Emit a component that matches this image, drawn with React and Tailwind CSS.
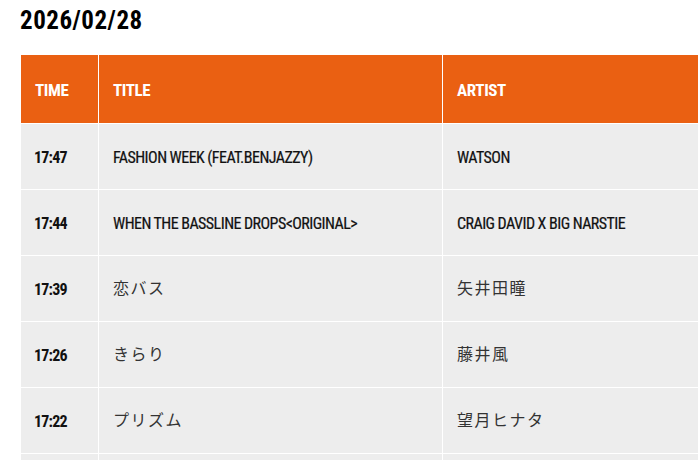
import React from "react";

const rows = [
  { time: "17:47", title: "FASHION WEEK (FEAT.BENJAZZY)", artist: "WATSON", jp: false },
  { time: "17:44", title: "WHEN THE BASSLINE DROPS<ORIGINAL>", artist: "CRAIG DAVID X BIG NARSTIE", jp: false },
  { time: "17:39", title: "恋バス", artist: "矢井田瞳", jp: true },
  { time: "17:26", title: "きらり", artist: "藤井風", jp: true },
  { time: "17:22", title: "プリズム", artist: "望月ヒナタ", jp: true },
  { time: "", title: "", artist: "", jp: false },
];

const cond = "font-['Roboto_Condensed','Open_Sans',sans-serif]";
const jpf = "font-['Noto_Sans_CJK_JP',sans-serif]";

function Cell({ jp, className, children }) {
  return (
    <div
      className={`flex items-center pl-[14px] leading-none ${className} ${
        jp
          ? `${jpf} text-[16px] tracking-[1.5px] text-[#333] pb-[3px]`
          : `${cond} text-[16px] tracking-[-0.55px] text-[#111] pt-[2px] [-webkit-text-stroke:0.2px_#111]`
      }`}
    >
      {children}
    </div>
  );
}

export default function App() {
  return (
    <div className="w-[698px] h-[460px] overflow-hidden bg-white">
      <h1 className={`${cond} font-bold text-[25px] tracking-[0.5px] leading-none text-black pl-[20px] pt-[8px] h-[55px]`}>
        2026/02/28
      </h1>
      <div className="ml-[21px] w-[760px]">
        <div className={`${cond} flex h-[68px] bg-[#ea6012] text-white font-bold text-[17px] tracking-[-0.4px] leading-none`}>
          <div className="w-[77px] flex items-center pl-[14px] pt-[2px]">TIME</div>
          <div className="w-px bg-white" />
          <div className="w-[343px] flex items-center pl-[14px] pt-[2px]">TITLE</div>
          <div className="w-px bg-white" />
          <div className="flex-1 flex items-center pl-[14px] pt-[2px]">ARTIST</div>
        </div>
        {rows.map((r, i) => (
          <div key={i} className="flex h-[66px] bg-[#ededed] border-t border-white">
            <div className={`${cond} w-[77px] flex items-center pl-[13px] pt-[2px] leading-none text-[16px] tracking-[-0.8px] font-bold text-[#111]`}>
              {r.time}
            </div>
            <div className="w-px bg-white" />
            <Cell jp={r.jp} className="w-[343px]">{r.title}</Cell>
            <div className="w-px bg-white" />
            <Cell jp={r.jp} className="flex-1">{r.artist}</Cell>
          </div>
        ))}
      </div>
    </div>
  );
}
